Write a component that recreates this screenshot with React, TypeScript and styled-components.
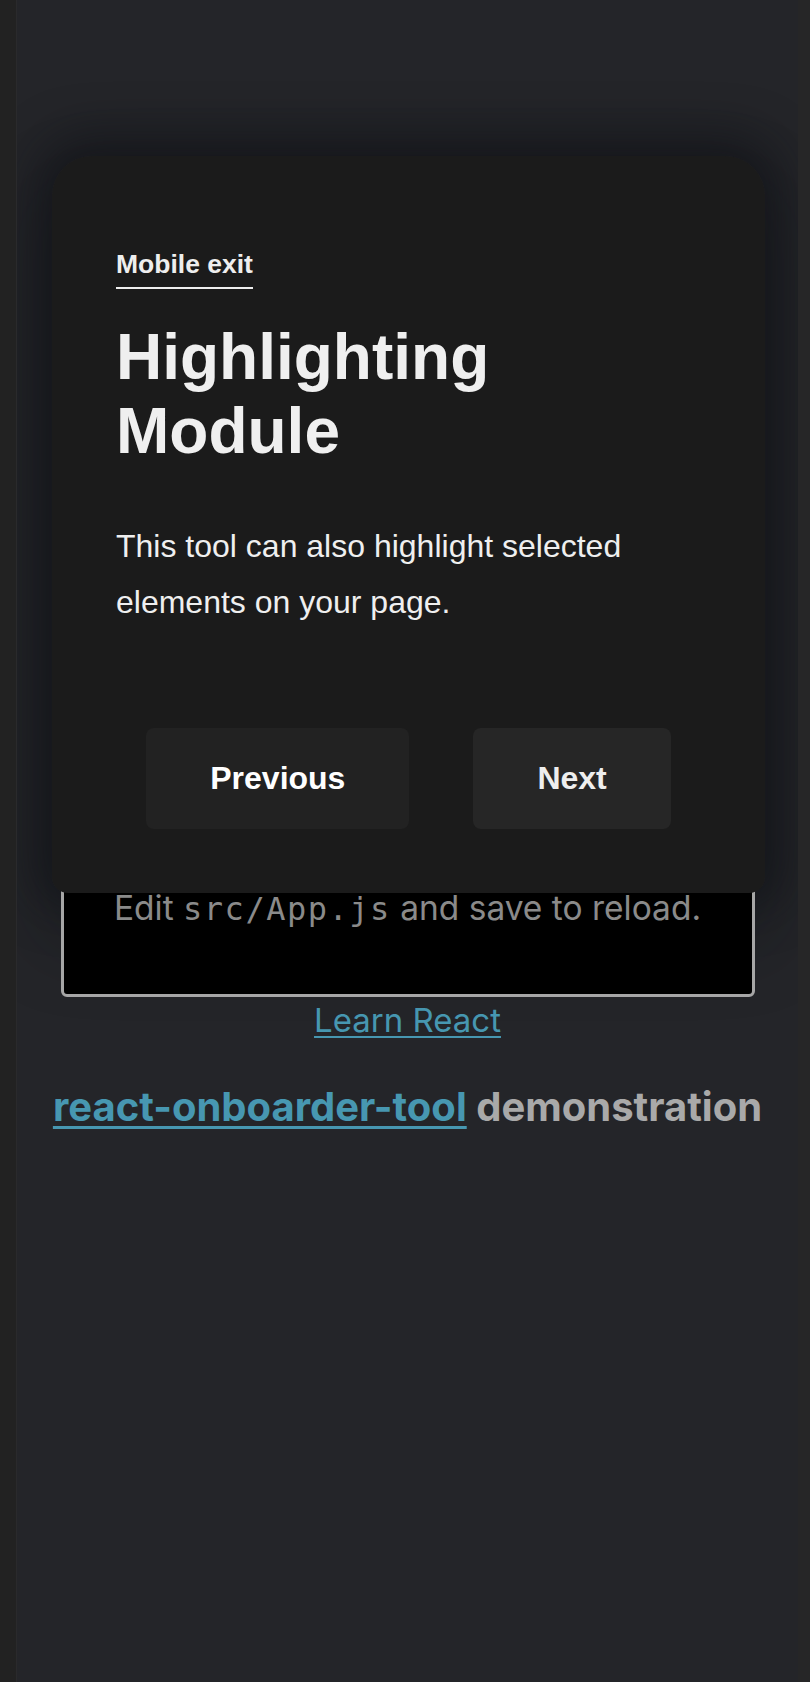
import React from "react";
import styled, { createGlobalStyle } from "styled-components";

const GlobalStyle = createGlobalStyle`
  html, body {
    margin: 0;
    padding: 0;
    background: #222222;
  }
  * { box-sizing: border-box; }
`;

const Frame = styled.div`
  display: flex;
  min-height: 100vh;
  background: #222222;
`;

const LeftRail = styled.div`
  flex: none;
  width: 17px;
  background: #222222;
  border-right: 1px solid #2a2a2c;
`;

const RightRail = styled.div`
  flex: none;
  width: 12px;
  background: #262627;
`;

const Stage = styled.main`
  position: relative;
  flex: 1;
  overflow: hidden;
  background: #242529;
  display: flex;
  flex-direction: column;
  align-items: center;
  font-family: Inter, "Noto Sans", sans-serif;
`;

const HeaderBox = styled.header`
  position: relative;
  z-index: 1;
  margin-top: 760px;
  width: 694px;
  height: 237px;
  background: #000000;
  border: 3px solid #a6a6a6;
  border-radius: 6px;
  padding-top: 126px;
  text-align: center;
`;

const EditLine = styled.p`
  margin: 0;
  font-size: 33.5px;
  line-height: 38px;
  color: #8a8a8a;
  font-weight: 400;
  white-space: nowrap;
`;

const Code = styled.code`
  font-family: "DejaVu Sans Mono", monospace;
  font-size: 32px;
  letter-spacing: 1.5px;
`;

const LearnLink = styled.a`
  margin-top: 4px;
  font-size: 33px;
  line-height: 38px;
  color: #4797b1;
  text-decoration: underline;
  text-decoration-thickness: 2px;
  text-underline-offset: 4px;
`;

const Title = styled.h1`
  margin: 45px 0 0;
  font-size: 40px;
  line-height: 46px;
  font-weight: 700;
  color: #a9a9a9;
  white-space: nowrap;
`;

const TitleLink = styled.a`
  color: #4797b1;
  text-decoration: underline;
  text-decoration-thickness: 3px;
  text-underline-offset: 5px;
`;

/* the modal's glow, painted beneath the page content it overlays */
const Halo = styled.div`
  position: absolute;
  z-index: 0;
  top: 156px;
  left: 35px;
  width: 713px;
  height: 737px;
  border-radius: 40px 40px 16px 16px;
  box-shadow: 0 -4px 46px 16px rgba(12, 15, 20, 0.55),
    0 40px 70px 14px rgba(12, 15, 20, 0.25);
  pointer-events: none;
`;

const Card = styled.section`
  position: absolute;
  z-index: 2;
  top: 156px;
  left: 35px;
  width: 713px;
  padding: 93px 64px 64px;
  background: #1b1b1b;
  border-radius: 40px 40px 16px 16px;
  font-family: "Liberation Sans", Arial, sans-serif;
  display: flex;
  flex-direction: column;
  align-items: flex-start;
`;

const Label = styled.span`
  display: inline-block;
  font-size: 26.5px;
  line-height: 30px;
  font-weight: 700;
  color: #eeeeee;
  padding-bottom: 8px;
  border-bottom: 2px solid #eeeeee;
`;

const Heading = styled.h2`
  margin: 32px 0 0;
  font-size: 64px;
  line-height: 73.5px;
  font-weight: 700;
  color: #efefef;
`;

const Body = styled.p`
  margin: 50px 0 0;
  font-size: 32px;
  line-height: 56px;
  color: #efefef;
`;

const Actions = styled.div`
  align-self: stretch;
  margin-top: 98px;
  display: flex;
  justify-content: center;
  gap: 64px;
`;

const Button = styled.button<{ $tone: "prev" | "next" }>`
  border: none;
  border-radius: 8px;
  padding: 32px 64px;
  font-family: "Liberation Sans", Arial, sans-serif;
  font-size: 32px;
  line-height: 37px;
  font-weight: 700;
  background: ${(p) => (p.$tone === "next" ? "#262626" : "#222222")};
  color: ${(p) => (p.$tone === "next" ? "#eeeeee" : "#ffffff")};
  cursor: pointer;
`;

export default function App() {
  return (
    <>
      <GlobalStyle />
      <Frame>
        <LeftRail />
        <Stage>
          <Halo />
          <HeaderBox>
            <EditLine>
              Edit <Code>src/App.js</Code> and save to reload.
            </EditLine>
          </HeaderBox>
          <LearnLink href="#">Learn React</LearnLink>
          <Title>
            <TitleLink href="#">react-onboarder-tool</TitleLink> demonstration
          </Title>
          <Card>
            <Label>Mobile exit</Label>
            <Heading>
              Highlighting
              <br />
              Module
            </Heading>
            <Body>
              This tool can also highlight selected
              <br />
              elements on your page.
            </Body>
            <Actions>
              <Button $tone="prev">Previous</Button>
              <Button $tone="next">Next</Button>
            </Actions>
          </Card>
        </Stage>
        <RightRail />
      </Frame>
    </>
  );
}
